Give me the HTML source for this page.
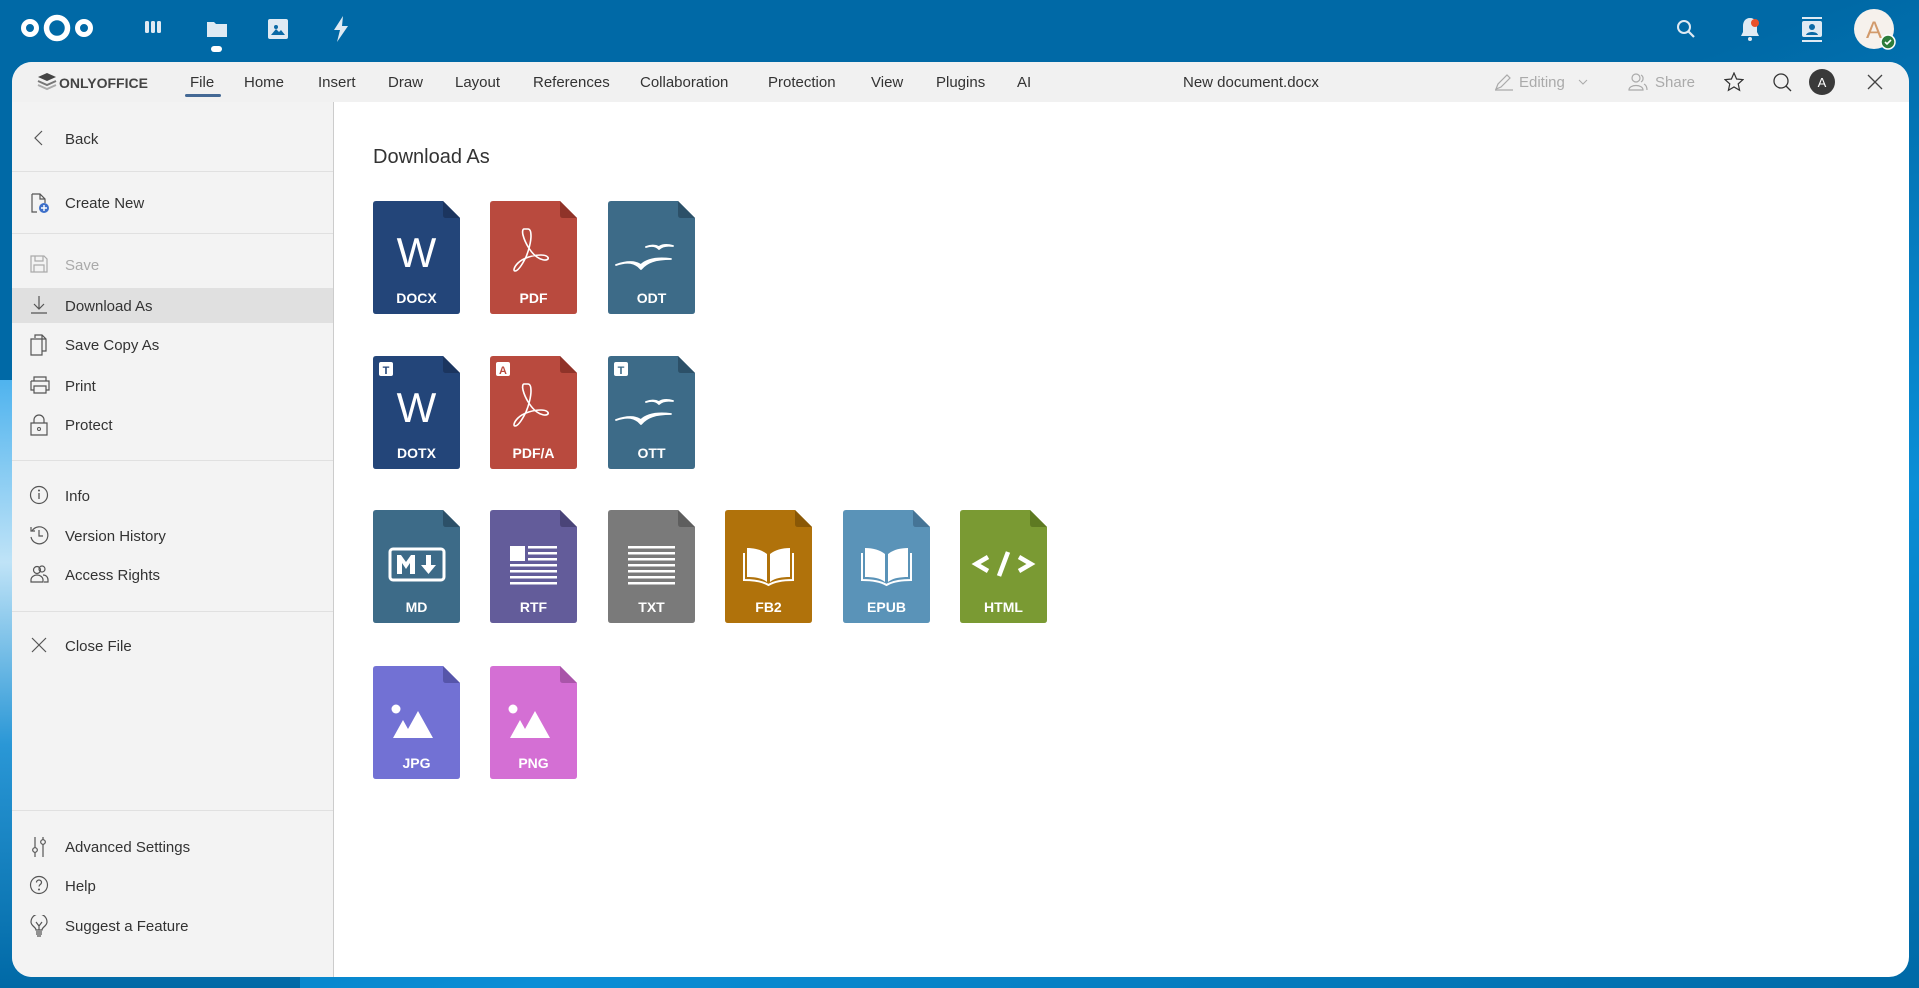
<!DOCTYPE html>
<html><head><meta charset="utf-8">
<style>
*{margin:0;padding:0;box-sizing:border-box}
html,body{width:1919px;height:988px;overflow:hidden}
body{font-family:"Liberation Sans",sans-serif;background:linear-gradient(160deg,#0069a6 0%,#0069a6 40%,#0a8ed6 70%,#0069a6 100%);position:relative;color:#333}
.bg2{position:absolute;left:0;top:380px;width:300px;height:608px;background:linear-gradient(180deg,#4fb3ee,#bfe3f7 30%,#2a97d6 60%,#0069a6)}
.hdr svg{position:absolute}
.panel{position:absolute;left:12px;top:62px;width:1897px;height:915px;background:#fff;border-radius:20px;overflow:hidden}
.tb{position:absolute;left:0;top:0;right:0;height:40px;background:#f1f1f1}
.tb span{position:absolute;top:12px;font-size:15px;color:#333}
.side{position:absolute;left:0;top:40px;width:322px;bottom:0;background:#f3f3f3;border-right:1px solid #ccc}
.item{position:absolute;left:0;width:321px;height:35px}
.item .t{position:absolute;left:53px;top:10px;font-size:15px;color:#333}
.item svg{position:absolute;left:17px;top:7px}
.sep{position:absolute;left:0;width:321px;height:1px;background:#e0e0e0}
.ic{position:absolute;width:87px;height:113px}
.ic text.l{font-family:"Liberation Sans",sans-serif;font-weight:bold;font-size:14px;fill:#fff;text-anchor:middle}
</style></head><body>
<div class="bg2"></div>
<div class="hdr">
<svg style="left:20px;top:13px" width="74" height="30" viewBox="0 0 74 30"><circle cx="10" cy="15" r="6.5" fill="none" stroke="#fff" stroke-width="5"/><circle cx="37" cy="15" r="10.5" fill="none" stroke="#fff" stroke-width="5.5"/><circle cx="64" cy="15" r="6.5" fill="none" stroke="#fff" stroke-width="5"/></svg>
<svg style="left:145px;top:21px" width="16" height="12"><rect x="0" y="0" width="4" height="12" rx="1.5" fill="#dfeaf3"/><rect x="6" y="0" width="4" height="12" rx="1.5" fill="#dfeaf3"/><rect x="12" y="0" width="4" height="12" rx="1.5" fill="#dfeaf3"/></svg>
<svg style="left:207px;top:20px" width="20" height="32"><path d="M0 2h7l2 2h11v13H0z" fill="#dfeaf3"/><rect x="4" y="26" width="11" height="6" rx="3" fill="#fff"/></svg>
<svg style="left:268px;top:19px" width="20" height="20"><rect width="20" height="20" rx="2" fill="#dfeaf3"/><circle cx="8" cy="8" r="2" fill="#0b6aa6"/><path d="M3 16l5-6 3 3 2-2 4 5z" fill="#0b6aa6"/></svg>
<svg style="left:333px;top:16px" width="16" height="26"><path d="M10 0L1 14h6l-3 12 11-16H9z" fill="#dfeaf3"/></svg>
<svg style="left:1676px;top:19px" width="20" height="20"><circle cx="8" cy="8" r="6" fill="none" stroke="#dfeaf3" stroke-width="2"/><path d="M12.5 12.5L18 18" stroke="#dfeaf3" stroke-width="2.2"/></svg>
<svg style="left:1739px;top:16px" width="22" height="26"><path d="M11 2c-5 0-7 4-7 8v6l-2 4h18l-2-4v-6c0-4-2-8-7-8z" fill="#dfeaf3"/><circle cx="11" cy="23" r="2" fill="#dfeaf3"/><circle cx="16" cy="7" r="4" fill="#e9502a"/></svg>
<svg style="left:1801px;top:17px" width="22" height="26"><rect x="1" y="0" width="20" height="2" fill="#dfeaf3"/><rect x="1" y="4" width="20" height="16" rx="2" fill="#dfeaf3"/><circle cx="11" cy="10" r="3" fill="#0b6aa6"/><path d="M5 18c1-4 11-4 12 0z" fill="#0b6aa6"/><rect x="1" y="23" width="20" height="2" fill="#dfeaf3"/></svg>
<svg style="left:1853px;top:8px" width="44" height="44"><circle cx="21" cy="21" r="20" fill="#f6f1ec"/><text x="21" y="30" font-size="24" fill="#d29a6b" text-anchor="middle" font-family="Liberation Sans">A</text><circle cx="35" cy="34" r="7" fill="#2d7d3b" stroke="#fff" stroke-width="1.5"/><path d="M32 34l2 2 4-4" stroke="#fff" stroke-width="1.6" fill="none"/></svg>
</div>

<div class="panel">
<div class="tb">
<svg style="position:absolute;left:25px;top:11px" width="20" height="18"><path d="M10 0l9 4-9 4-9-4z" fill="#444"/><path d="M1 8l9 4 9-4" fill="none" stroke="#777" stroke-width="2"/><path d="M1 12l9 4 9-4" fill="none" stroke="#aaa" stroke-width="2"/></svg>
<span style="left:47px;top:13px;font-weight:bold;font-size:14px;color:#444">ONLYOFFICE</span>
<span style="left:178px">File</span>
<div style="position:absolute;left:173px;top:32px;width:36px;height:3px;background:#446995;border-radius:2px"></div>
<span style="left:232px">Home</span>
<span style="left:306px">Insert</span>
<span style="left:376px">Draw</span>
<span style="left:443px">Layout</span>
<span style="left:521px">References</span>
<span style="left:628px">Collaboration</span>
<span style="left:756px">Protection</span>
<span style="left:859px">View</span>
<span style="left:924px">Plugins</span>
<span style="left:1005px">AI</span>
<span style="left:1171px">New document.docx</span>
<svg style="position:absolute;left:1482px;top:11px" width="20" height="18"><path d="M2 16l2-5 9-9 3 3-9 9z M1 17h18" fill="none" stroke="#aaa" stroke-width="1.2"/></svg>
<span style="left:1507px;color:#aaa">Editing</span>
<svg style="position:absolute;left:1566px;top:17px" width="10" height="6"><path d="M1 1l4 4 4-4" fill="none" stroke="#aaa"/></svg>
<svg style="position:absolute;left:1616px;top:10px" width="20" height="20"><circle cx="8" cy="6" r="4" fill="none" stroke="#aaa" stroke-width="1.2"/><path d="M1 18c0-6 14-6 14 0z" fill="none" stroke="#aaa" stroke-width="1.2"/><path d="M13 3a4 4 0 010 7M16 12c2 1 3 3 3 6" fill="none" stroke="#aaa" stroke-width="1.2"/></svg>
<span style="left:1643px;color:#aaa">Share</span>
<svg style="position:absolute;left:1712px;top:10px" width="20" height="20"><path d="M10 1l2.6 6 6.4.6-4.8 4.3 1.4 6.4L10 15l-5.6 3.3 1.4-6.4L1 7.6 7.4 7z" fill="none" stroke="#333" stroke-width="1.2"/></svg>
<svg style="position:absolute;left:1760px;top:10px" width="20" height="20"><circle cx="9" cy="9" r="7" fill="none" stroke="#333" stroke-width="1.3"/><path d="M14 14l5 5" stroke="#333" stroke-width="1.3"/></svg>
<svg style="position:absolute;left:1797px;top:7px" width="26" height="26"><circle cx="13" cy="13" r="13" fill="#3a3a3a"/><text x="13" y="18" font-size="13" fill="#fff" text-anchor="middle" font-family="Liberation Sans">A</text></svg>
<svg style="position:absolute;left:1855px;top:12px" width="16" height="16"><path d="M1 1l14 14M15 1L1 15" stroke="#444" stroke-width="1.3"/></svg>
</div>

<div class="side">
<div class="item" style="top:19px"><svg width="20" height="20"><path d="M13 3l-7 7 7 7" fill="none" stroke="#555" stroke-width="1.2"/></svg><span class="t">Back</span></div>
<div class="sep" style="top:69px"></div>
<div class="item" style="top:83px"><svg width="22" height="22"><path d="M3 2h8l5 5v4M11 2v5h5M8 20H3V2" fill="none" stroke="#555" stroke-width="1.2"/><circle cx="15" cy="16" r="5" fill="#3d6fc9"/><path d="M15 13v6M12 16h6" stroke="#fff" stroke-width="1.4"/></svg><span class="t">Create New</span></div>
<div class="sep" style="top:131px"></div>
<div class="item" style="top:145px"><svg width="20" height="20"><path d="M2 2h13l3 3v13H2z M6 2v5h8V2 M5 18v-7h10v7" fill="none" stroke="#aaa" stroke-width="1.2"/></svg><span class="t" style="color:#aaa">Save</span></div>
<div class="item" style="top:186px;background:#e0e0e0;left:0"><svg width="20" height="20"><path d="M10 1v13M5 9l5 5 5-5M2 18h16" fill="none" stroke="#555" stroke-width="1.2"/></svg><span class="t">Download As</span></div>
<div class="item" style="top:225px"><svg width="20" height="22"><path d="M6 4V1h7l4 4v12h-4M13 1v4h4M2 5h11v16H2z" fill="none" stroke="#555" stroke-width="1.2"/></svg><span class="t">Save Copy As</span></div>
<div class="item" style="top:266px"><svg width="22" height="20"><path d="M5 6V2h12v4M2 6h18v9h-3M5 15H2V6M5 11h12v7H5z" fill="none" stroke="#555" stroke-width="1.2"/></svg><span class="t">Print</span></div>
<div class="item" style="top:305px"><svg width="20" height="22"><path d="M5 9V6a5 5 0 0110 0v3M2 9h16v12H2z" fill="none" stroke="#555" stroke-width="1.2"/><circle cx="10" cy="15" r="1.5" fill="none" stroke="#555"/></svg><span class="t">Protect</span></div>
<div class="sep" style="top:358px"></div>
<div class="item" style="top:376px"><svg width="20" height="20"><circle cx="10" cy="10" r="8.5" fill="none" stroke="#555" stroke-width="1.2"/><path d="M10 8v6" stroke="#555" stroke-width="1.3"/><circle cx="10" cy="5.5" r="1" fill="#555"/></svg><span class="t">Info</span></div>
<div class="item" style="top:416px"><svg width="20" height="20"><path d="M3 6A8.5 8.5 0 1 1 2 12M2 2v4h4M10 5v6h4" fill="none" stroke="#555" stroke-width="1.2"/></svg><span class="t">Version History</span></div>
<div class="item" style="top:455px"><svg width="20" height="20"><circle cx="8" cy="6" r="3.5" fill="none" stroke="#555" stroke-width="1.2"/><circle cx="13" cy="5" r="3" fill="none" stroke="#555" stroke-width="1.2"/><path d="M2 18v-2c0-3 3-5 6-5s6 2 6 5v2z M14 11c3 0 5 2 5 5v2h-4" fill="none" stroke="#555" stroke-width="1.2"/></svg><span class="t">Access Rights</span></div>
<div class="sep" style="top:509px"></div>
<div class="item" style="top:526px"><svg width="20" height="20"><path d="M3 3l14 14M17 3L3 17" stroke="#555" stroke-width="1.2"/></svg><span class="t">Close File</span></div>
<div class="sep" style="top:708px"></div>
<div class="item" style="top:727px"><svg width="20" height="22"><path d="M6 1v11M6 16v5M14 1v3M14 8v13" stroke="#555" stroke-width="1.2"/><circle cx="6" cy="14" r="2.3" fill="none" stroke="#555" stroke-width="1.2"/><circle cx="14" cy="6" r="2.3" fill="none" stroke="#555" stroke-width="1.2"/></svg><span class="t">Advanced Settings</span></div>
<div class="item" style="top:766px"><svg width="20" height="20"><circle cx="10" cy="10" r="8.5" fill="none" stroke="#555" stroke-width="1.2"/><path d="M7.5 7.5a2.5 2.5 0 115 0c0 2-2.5 2-2.5 4" fill="none" stroke="#555" stroke-width="1.2"/><circle cx="10" cy="14.5" r="1" fill="#555"/></svg><span class="t">Help</span></div>
<div class="item" style="top:806px"><svg width="20" height="22"><path d="M7 15c0-3-5-4-5-8a8 8 0 0116 0c0 4-5 5-5 8z M7 17h6M7 19h6M8 21h4M7 7l3 4 3-4M10 11v4" fill="none" stroke="#555" stroke-width="1.2"/></svg><span class="t">Suggest a Feature</span></div>
</div>

<div style="position:absolute;left:361px;top:84px;font-size:20px;color:#333">Download As</div>
</div>

<svg width="0" height="0" style="position:absolute"><defs>
<path id="bd" d="M3 0H70L87 17V110Q87 113 84 113H3Q0 113 0 110V3Q0 0 3 0Z"/>
<path id="fd" d="M70 0V14Q70 17 73 17H87Z"/>
<g id="pdf"><path d="M34 28c-1 0-2 2-1 6 2 8 8 18 14 22 4 3 9 4 11 2 1-2-2-4-7-4-8 0-18 3-23 8-4 4-5 8-3 8 3 0 7-6 11-14 3-7 5-16 5-21 0-4-1-7-3-7z" fill="none" stroke="#fff" stroke-width="1.6"/></g>
<g id="odt"><path d="M8 64c11-4 19-3 25 4 6-7 14-10 30-10-16-2-25 1-30 6-6-4-14-4-25 0z M38 46c6-2 10-1 13 2 3-3 7-4 14-3-7-2-11-1-14 1-4-2-8-2-13 0z" fill="#fff" stroke="#fff" stroke-width="1.8" stroke-linejoin="round"/></g>
</defs></svg>

<svg class="ic" style="left:373px;top:201px" viewBox="0 0 87 113"><use href="#bd" fill="#234579"/><use href="#fd" fill="#1b355f"/><text x="43.5" y="66" font-size="42" fill="#fff" text-anchor="middle" font-family="Liberation Sans">W</text><text class="l" x="43.5" y="102">DOCX</text></svg>
<svg class="ic" style="left:490px;top:201px" viewBox="0 0 87 113"><use href="#bd" fill="#b94a3e"/><use href="#fd" fill="#8f3329"/><use href="#pdf"/><text class="l" x="43.5" y="102">PDF</text></svg>
<svg class="ic" style="left:608px;top:201px" viewBox="0 0 87 113"><use href="#bd" fill="#3d6b88"/><use href="#fd" fill="#2c5068"/><use href="#odt"/><text class="l" x="43.5" y="102">ODT</text></svg>
<svg class="ic" style="left:373px;top:356px" viewBox="0 0 87 113"><use href="#bd" fill="#234579"/><use href="#fd" fill="#1b355f"/><rect x="6" y="6" width="14" height="14" rx="2" fill="#fff"/><text x="13" y="18" font-size="11" font-weight="bold" fill="#234579" text-anchor="middle" font-family="Liberation Sans">T</text><text x="43.5" y="66" font-size="42" fill="#fff" text-anchor="middle" font-family="Liberation Sans">W</text><text class="l" x="43.5" y="102">DOTX</text></svg>
<svg class="ic" style="left:490px;top:356px" viewBox="0 0 87 113"><use href="#bd" fill="#b94a3e"/><use href="#fd" fill="#8f3329"/><rect x="6" y="6" width="14" height="14" rx="2" fill="#fff"/><text x="13" y="18" font-size="11" font-weight="bold" fill="#b94a3e" text-anchor="middle" font-family="Liberation Sans">A</text><use href="#pdf"/><text class="l" x="43.5" y="102">PDF/A</text></svg>
<svg class="ic" style="left:608px;top:356px" viewBox="0 0 87 113"><use href="#bd" fill="#3d6b88"/><use href="#fd" fill="#2c5068"/><rect x="6" y="6" width="14" height="14" rx="2" fill="#fff"/><text x="13" y="18" font-size="11" font-weight="bold" fill="#3d6b88" text-anchor="middle" font-family="Liberation Sans">T</text><use href="#odt"/><text class="l" x="43.5" y="102">OTT</text></svg>
<svg class="ic" style="left:373px;top:510px" viewBox="0 0 87 113"><use href="#bd" fill="#3d6b88"/><use href="#fd" fill="#2c5068"/><rect x="17" y="39" width="54" height="31" rx="3" fill="none" stroke="#fff" stroke-width="3"/><path d="M24 64V45h4l5 7 5-7h4v19h-5V53l-4 6-4-6v11z M53 45h5v10h5l-7.5 9-7.5-9h5z" fill="#fff"/><text class="l" x="43.5" y="102">MD</text></svg>
<svg class="ic" style="left:490px;top:510px" viewBox="0 0 87 113"><use href="#bd" fill="#635c9a"/><use href="#fd" fill="#4a4478"/><rect x="20" y="36" width="15" height="15" fill="#fff"/><g fill="#fff"><rect x="38" y="36" width="29" height="2.5"/><rect x="38" y="42" width="29" height="2.5"/><rect x="38" y="48" width="29" height="2.5"/><rect x="20" y="54" width="47" height="2.5"/><rect x="20" y="60" width="47" height="2.5"/><rect x="20" y="66" width="47" height="2.5"/><rect x="20" y="72" width="47" height="2.5"/></g><text class="l" x="43.5" y="102">RTF</text></svg>
<svg class="ic" style="left:608px;top:510px" viewBox="0 0 87 113"><use href="#bd" fill="#7a7a7a"/><use href="#fd" fill="#5e5e5e"/><g fill="#fff"><rect x="20" y="36" width="47" height="2.5"/><rect x="20" y="42" width="47" height="2.5"/><rect x="20" y="48" width="47" height="2.5"/><rect x="20" y="54" width="47" height="2.5"/><rect x="20" y="60" width="47" height="2.5"/><rect x="20" y="66" width="47" height="2.5"/><rect x="20" y="72" width="47" height="2.5"/></g><text class="l" x="43.5" y="102">TXT</text></svg>
<svg class="ic" style="left:725px;top:510px" viewBox="0 0 87 113"><use href="#bd" fill="#b0720b"/><use href="#fd" fill="#8a5806"/><path d="M22 38c8 0 15 2 20 6v28c-5-4-12-5-20-5z M65 38c-8 0-15 2-20 6v28c5-4 12-5 20-5z" fill="#fff"/><path d="M19 43v27c9 0 18 1 24.5 5 6.5-4 15.5-5 24.5-5V43" fill="none" stroke="#fff" stroke-width="2"/><text class="l" x="43.5" y="102">FB2</text></svg>
<svg class="ic" style="left:843px;top:510px" viewBox="0 0 87 113"><use href="#bd" fill="#5a93b8"/><use href="#fd" fill="#457496"/><path d="M22 38c8 0 15 2 20 6v28c-5-4-12-5-20-5z M65 38c-8 0-15 2-20 6v28c5-4 12-5 20-5z" fill="#fff"/><path d="M19 43v27c9 0 18 1 24.5 5 6.5-4 15.5-5 24.5-5V43" fill="none" stroke="#fff" stroke-width="2"/><text class="l" x="43.5" y="102">EPUB</text></svg>
<svg class="ic" style="left:960px;top:510px" viewBox="0 0 87 113"><use href="#bd" fill="#7a9a33"/><use href="#fd" fill="#5e7a22"/><path d="M28 47l-12 7 12 7 M59 47l12 7-12 7 M48 42l-9 24" fill="none" stroke="#fff" stroke-width="4.5"/><text class="l" x="43.5" y="102">HTML</text></svg>
<svg class="ic" style="left:373px;top:666px" viewBox="0 0 87 113"><use href="#bd" fill="#7271d4"/><use href="#fd" fill="#5655aa"/><circle cx="23" cy="43" r="4.5" fill="#fff"/><path d="M20 72l10-18 5 9 10-18 15 27z" fill="#fff"/><text class="l" x="43.5" y="102">JPG</text></svg>
<svg class="ic" style="left:490px;top:666px" viewBox="0 0 87 113"><use href="#bd" fill="#d46fd4"/><use href="#fd" fill="#a955a9"/><circle cx="23" cy="43" r="4.5" fill="#fff"/><path d="M20 72l10-18 5 9 10-18 15 27z" fill="#fff"/><text class="l" x="43.5" y="102">PNG</text></svg>
</body></html>
